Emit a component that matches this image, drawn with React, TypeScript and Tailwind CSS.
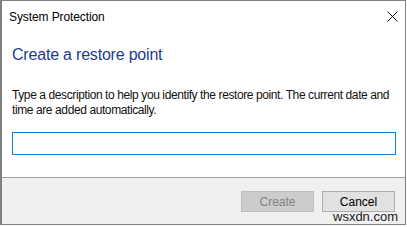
import React from "react";

export default function App() {
  return (
    <div className="relative w-[407px] h-[227px] bg-white overflow-hidden" style={{ fontFamily: '"Liberation Sans", Arial, sans-serif' }}>
      <div className="w-[406px] h-[225px] border-l-2 border-r border-t border-b border-[#7f7f7f] flex flex-col bg-white">
        {/* title bar */}
        <div className="h-[31px] flex items-center justify-between pl-[7px] pr-[7px] shrink-0">
          <span className="text-[12px] text-black leading-none tracking-[-0.1px]">System Protection</span>
          <svg width="11" height="11" viewBox="0 0 11 11" className="shrink-0">
            <path d="M0.5 0.5 L10.5 10.5 M10.5 0.5 L0.5 10.5" stroke="#111" strokeWidth="1" fill="none" />
          </svg>
        </div>
        {/* content */}
        <div className="flex-1 flex flex-col pl-[10px] pr-[9px]">
          <div className="mt-[13px] h-[20px] leading-[20px] text-[16px] tracking-[-0.2px] text-[#1c3b93]">Create a restore point</div>
          <div className="mt-[23px] text-[12px] leading-[15px] tracking-[-0.4px] text-[#111]">
            <div className="whitespace-nowrap">Type a description to help you identify the restore point. The current date and</div>
            <div className="whitespace-nowrap">time are added automatically.</div>
          </div>
          <div className="mt-[14px] h-[23px] border border-[#1a78c8] bg-white"></div>
        </div>
        {/* footer */}
        <div className="h-[47px] shrink-0 border-t border-[#a0a0a0] bg-[#f0f0f0] flex justify-end items-start gap-[8px] pt-[13px] pr-[10px]">
          <div className="w-[73px] h-[21px] border border-[#bfbfbf] bg-[#cccccc] flex items-center justify-center text-[12px] text-[#838383]">Create</div>
          <div className="w-[73px] h-[21px] border border-[#adadad] bg-[#e1e1e1] flex items-center justify-center text-[12px] text-black">Cancel</div>
        </div>
      </div>
      <div className="absolute left-[333px] top-[210px] text-[13px] leading-[14px] text-[#1a1a1a]">wsxdn.com</div>
    </div>
  );
}
